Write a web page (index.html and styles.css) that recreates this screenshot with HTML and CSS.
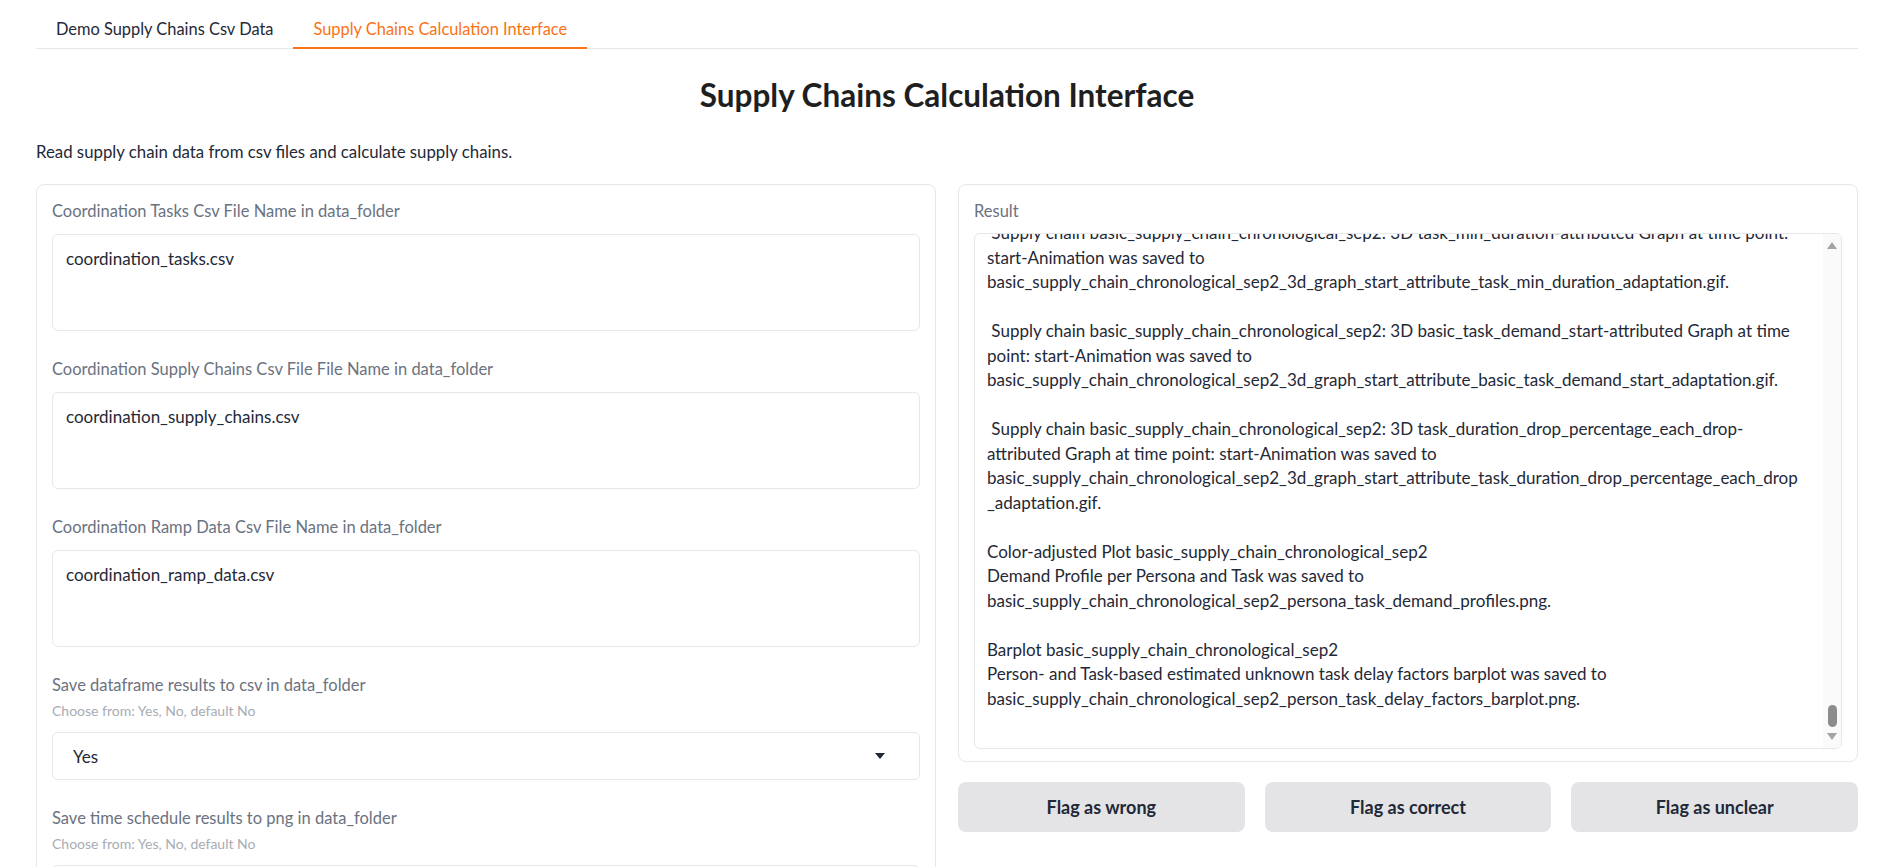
FILE: index.html
```html
<!DOCTYPE html>
<html lang="en">
<head>
<meta charset="utf-8">
<title>Supply Chains Calculation Interface</title>
<link rel="stylesheet" href="styles.css">
</head>
<body>
<div class="app">
  <nav class="tabs">
    <button class="tab">Demo Supply Chains Csv Data</button>
    <button class="tab tab-active">Supply Chains Calculation Interface</button>
  </nav>

  <h1 class="title">Supply Chains Calculation Interface</h1>
  <p class="desc">Read supply chain data from csv files and calculate supply chains.</p>

  <div class="columns">
    <section class="panel">
      <div class="field">
        <div class="label">Coordination Tasks Csv File Name in data_folder</div>
        <div class="textbox">coordination_tasks.csv</div>
      </div>
      <div class="field">
        <div class="label">Coordination Supply Chains Csv File File Name in data_folder</div>
        <div class="textbox">coordination_supply_chains.csv</div>
      </div>
      <div class="field">
        <div class="label">Coordination Ramp Data Csv File Name in data_folder</div>
        <div class="textbox">coordination_ramp_data.csv</div>
      </div>
      <div class="field">
        <div class="label label-info">Save dataframe results to csv in data_folder</div>
        <div class="info">Choose from: Yes, No, default No</div>
        <div class="dropdown"><span>Yes</span><span class="caret"></span></div>
      </div>
      <div class="field">
        <div class="label label-info">Save time schedule results to png in data_folder</div>
        <div class="info">Choose from: Yes, No, default No</div>
        <div class="dropdown"><span>Yes</span><span class="caret"></span></div>
      </div>
    </section>

    <div class="right">
      <section class="panel panel-result">
        <div class="label">Result</div>
        <div class="result-box">
          <div class="result-view">
            <div class="result-text"> Supply chain basic_supply_chain_chronological_sep2: 3D task_min_duration-attributed Graph at time point:
start-Animation was saved to
basic_supply_chain_chronological_sep2_3d_graph_start_attribute_task_min_duration_adaptation.gif.

 Supply chain basic_supply_chain_chronological_sep2: 3D basic_task_demand_start-attributed Graph at time
point: start-Animation was saved to
basic_supply_chain_chronological_sep2_3d_graph_start_attribute_basic_task_demand_start_adaptation.gif.

 Supply chain basic_supply_chain_chronological_sep2: 3D task_duration_drop_percentage_each_drop-
attributed Graph at time point: start-Animation was saved to
basic_supply_chain_chronological_sep2_3d_graph_start_attribute_task_duration_drop_percentage_each_drop
_adaptation.gif.

Color-adjusted Plot basic_supply_chain_chronological_sep2
Demand Profile per Persona and Task was saved to
basic_supply_chain_chronological_sep2_persona_task_demand_profiles.png.

Barplot basic_supply_chain_chronological_sep2
Person- and Task-based estimated unknown task delay factors barplot was saved to
basic_supply_chain_chronological_sep2_person_task_delay_factors_barplot.png.
</div>
          </div>
          <div class="scrollbar">
            <span class="arrow arrow-up"></span>
            <span class="track"><span class="thumb"></span></span>
            <span class="arrow arrow-down"></span>
          </div>
        </div>
      </section>
      <div class="buttons">
        <button class="btn">Flag as wrong</button>
        <button class="btn">Flag as correct</button>
        <button class="btn">Flag as unclear</button>
      </div>
    </div>
  </div>
</div>
</body>
</html>
```

FILE: styles.css
```css
* { box-sizing: border-box; }

html, body {
  margin: 0;
  padding: 0;
  background: #ffffff;
}

body {
  font-family: Lato, "Noto Sans", sans-serif;
  color: #1f2937;
  font-size: 16px;
}

.app {
  padding: 8px 33px 0 36px;
}

.tabs {
  display: flex;
  border-bottom: 1px solid #e5e7eb;
  height: 41px;
}

.tab {
  font: inherit;
  font-size: 16.4px;
  background: none;
  border: none;
  padding: 0 20px;
  height: 40px;
  color: #1f2937;
  cursor: pointer;
}

.tab-active {
  color: #f97316;
  border-bottom: 2px solid #f97316;
  height: 41px;
  padding-top: 2px;
}

.title {
  margin: 26px 0 0;
  text-align: center;
  font-size: 31.5px;
  line-height: 40px;
  font-weight: 700;
  color: #1f1f1f;
}

.desc {
  margin: 25px 0 0;
  line-height: 24px;
  font-size: 16.8px;
  color: #1f2937;
}

.columns {
  display: grid;
  grid-template-columns: minmax(0, 1fr) minmax(0, 1fr);
  gap: 22px;
  margin-top: 20px;
  align-items: start;
}

.panel {
  border: 1px solid #e5e7eb;
  border-radius: 8px;
  padding: 15px 15px 12px 15px;
  display: flex;
  flex-direction: column;
  gap: 27px;
}

.field {
  display: flex;
  flex-direction: column;
}

.label {
  font-size: 16.5px;
  line-height: 22px;
  color: #6b7280;
  margin-bottom: 12px;
}

.label-info {
  margin-bottom: 5px;
}

.info {
  font-size: 14px;
  line-height: 20px;
  color: #a8acb3;
  margin-bottom: 11px;
}

.textbox {
  height: 97px;
  border: 1px solid #e5e7eb;
  border-radius: 6px;
  padding: 12px 13px;
  line-height: 24px;
  font-size: 17px;
  color: #1f2937;
}

.dropdown {
  height: 48px;
  border: 1px solid #e5e7eb;
  border-radius: 6px;
  padding: 0 34px 0 20px;
  display: flex;
  align-items: center;
  justify-content: space-between;
  font-size: 17px;
}

.caret {
  width: 0;
  height: 0;
  border-left: 5px solid transparent;
  border-right: 5px solid transparent;
  border-top: 6px solid #1f2937;
}

.right {
  display: flex;
  flex-direction: column;
  gap: 20px;
}

.panel-result {
  gap: 0;
}

.panel-result .label {
  margin-bottom: 11px;
}

.result-box {
  height: 516px;
  border: 1px solid #e5e7eb;
  border-radius: 6px;
  display: flex;
  overflow: hidden;
}

.result-view {
  flex: 1 1 auto;
  min-width: 0;
  overflow: hidden;
  padding: 0 0 0 12px;
}

.result-text {
  margin-top: -13px;
  white-space: pre;
  font-size: 17px;
  line-height: 24.5px;
  color: #1f2937;
}

.scrollbar {
  width: 18px;
  flex: 0 0 18px;
  background: #fafafa;
  display: flex;
  flex-direction: column;
  align-items: center;
  padding: 8px 0 8px;
}

.arrow {
  width: 0;
  height: 0;
  border-left: 5px solid transparent;
  border-right: 5px solid transparent;
}

.arrow-up {
  border-bottom: 7px solid #a3a3a3;
}

.arrow-down {
  border-top: 7px solid #a3a3a3;
}

.track {
  flex: 1 1 auto;
  display: flex;
  flex-direction: column;
  justify-content: flex-end;
  padding-bottom: 6px;
}

.thumb {
  width: 9px;
  height: 22px;
  border-radius: 5px;
  background: #8c8c8c;
}

.buttons {
  display: flex;
  gap: 20px;
}

.btn {
  flex: 1 1 0;
  height: 50px;
  border: none;
  border-radius: 8px;
  background: #e4e4e7;
  font: inherit;
  font-size: 18px;
  font-weight: 700;
  color: #1f2937;
}
```
